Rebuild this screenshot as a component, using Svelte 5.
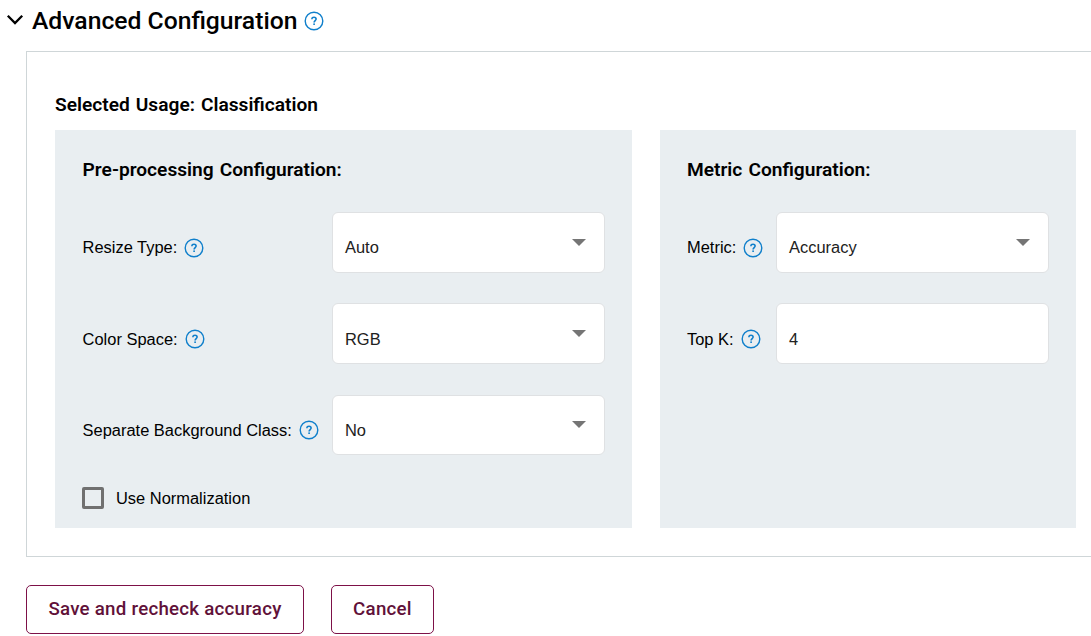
<script>
  const preprocessing = [
    { label: 'Resize Type:', value: 'Auto' },
    { label: 'Color Space:', value: 'RGB' },
    { label: 'Separate Background Class:', value: 'No' },
  ];
  const metric = [
    { label: 'Metric:', value: 'Accuracy' },
    { label: 'Top K:', value: '4', input: true },
  ];
</script>

{#snippet help()}
  <svg class="help" width="20" height="20" viewBox="0 0 20 20" fill="none" role="img" aria-label="Help">
    <circle cx="10" cy="10" r="8.8" stroke="#0f7fcb" stroke-width="1.4" />
    <path d="M7.9 8.2C7.9 6.9 8.8 6.2 10 6.2S12.1 6.9 12.1 8C12.1 9.5 10.1 9.6 10.1 11.4" stroke="#0f7fcb" stroke-width="1.6" />
    <rect x="9.3" y="12.4" width="1.6" height="1.6" fill="#0f7fcb" />
  </svg>
{/snippet}

{#snippet row(field)}
  <div class="row">
    <div class="label"><span>{field.label}</span>{@render help()}</div>
    <div class="field">
      <span>{field.value}</span>
      {#if !field.input}
        <svg class="arrow" width="14" height="8" viewBox="0 0 14 8"><path d="M0 0H14L7 7Z" fill="#757575" /></svg>
      {/if}
    </div>
  </div>
{/snippet}

<main>
  <header>
    <svg class="chevron" width="18" height="12" viewBox="0 0 18 12" fill="none">
      <path d="M1.8 1.8L9 9L16.2 1.8" stroke="#000" stroke-width="2.3" />
    </svg>
    <h1>Advanced Configuration</h1>
    {@render help()}
  </header>

  <section class="panel">
    <h2 class="usage">Selected Usage: Classification</h2>
    <div class="cards">
      <div class="card pre">
        <h2 class="pre-title">Pre-processing Configuration:</h2>
        <div class="rows">
          {#each preprocessing as field}{@render row(field)}{/each}
        </div>
        <div class="check"><span class="box"></span><span>Use Normalization</span></div>
      </div>
      <div class="card metric">
        <h2 class="metric-title">Metric Configuration:</h2>
        <div class="rows">
          {#each metric as field}{@render row(field)}{/each}
        </div>
      </div>
    </div>
  </section>

  <footer>
    <button class="save">Save and recheck accuracy</button>
    <button class="cancel">Cancel</button>
  </footer>
</main>

<style>
  :global(body) { background: #fff; overflow: hidden; }
  main {
    height: 636px;
    overflow: hidden;
    color: #000;
    font: 16.45px/20px "Liberation Sans", Arial, sans-serif;
  }
  svg { display: block; flex: none; }
  h1, h2 { margin: 0; font-family: Roboto, sans-serif; white-space: nowrap; }
  header { display: flex; align-items: center; height: 41px; padding: 0 0 10px 6px; }
  h1 { width: 266px; margin: 0 6px 0 8px; font-size: 24.7px; font-weight: 500; line-height: 40px; }
  .chevron { margin-top: -1px; }
  h2 { font-size: 19.15px; font-weight: 600; line-height: 24px; word-spacing: 1.3px; }
  .panel {
    box-sizing: border-box;
    height: 506px;
    margin-left: 26px;
    padding: 41px 14px 0 28px;
    border: 1px solid #cfd6d8;
    border-right: 0;
  }
  .cards { display: grid; grid-template-columns: 577px 416px; gap: 28px; margin-top: 13px; }
  .card { box-sizing: border-box; height: 398px; padding: 28px 27px 0; background: #e9eef1; }
  .pre-title, .pre .label { padding-left: 0.6px; }
  .rows { display: grid; gap: 30.7px; margin-top: 29.9px; }
  .row { display: flex; justify-content: space-between; height: 60.65px; }
  .label { display: flex; align-items: center; gap: 7px; padding-top: 10.2px; white-space: nowrap; }
  .label .help { margin-top: 1px; }
  .field {
    box-sizing: border-box;
    display: flex;
    align-items: center;
    justify-content: space-between;
    width: 273px;
    padding: 10.2px 18px 0 12px;
    background: #fff;
    border: 1px solid #dfe1e3;
    border-radius: 6px;
    color: #212121;
  }
  .arrow { margin-bottom: 9.4px; }
  .check { display: flex; align-items: center; gap: 12px; margin-top: 31.7px; }
  .box { box-sizing: border-box; width: 22px; height: 22px; border: 3px solid #707070; border-radius: 2px; }
  footer { display: flex; gap: 27px; padding: 28px 0 0 26px; }
  button {
    box-sizing: border-box;
    height: 49px;
    padding: 0 0 2px;
    background: #fff;
    border: 1px solid #7d1148;
    border-radius: 5px;
    color: #611139;
    font: 500 18.72px/24px Roboto, sans-serif;
    letter-spacing: 0.25px;
    white-space: nowrap;
  }
  .save { width: 278px; }
  .cancel { width: 103px; }
</style>
